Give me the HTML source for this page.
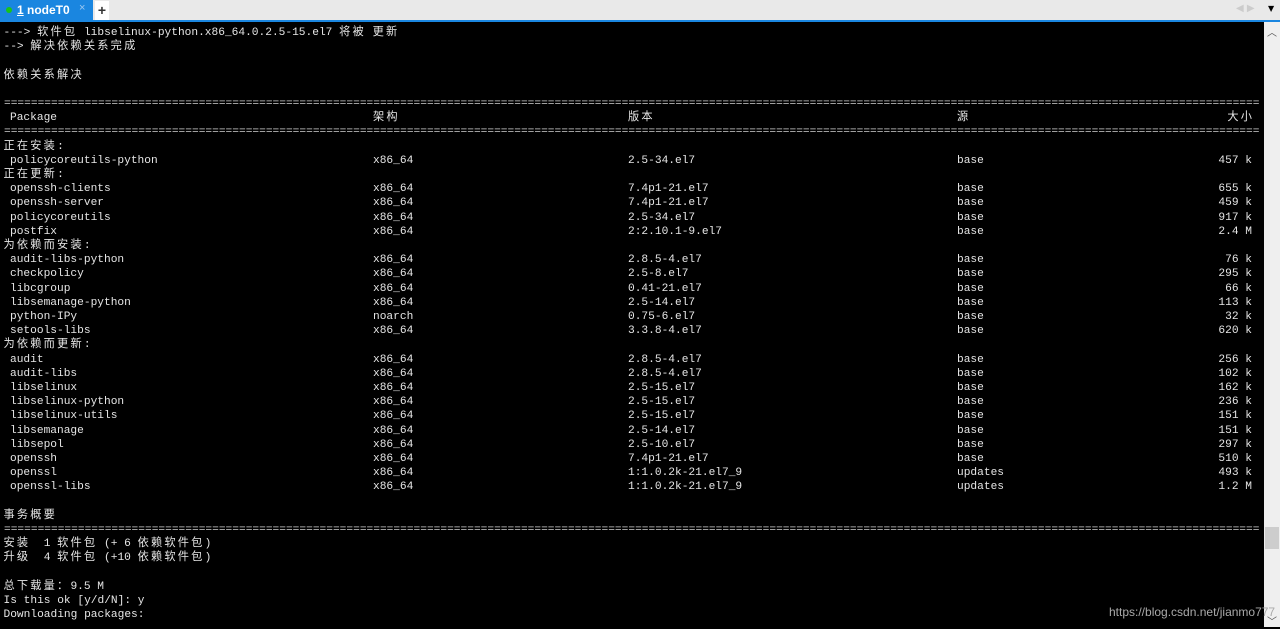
<!DOCTYPE html>
<html><head><meta charset="utf-8"><style>
*{margin:0;padding:0;box-sizing:border-box}
body{width:1280px;height:627px;overflow:hidden;background:#000;position:relative;font-family:"Liberation Mono","Noto Sans CJK SC",monospace;}
#bar{position:absolute;left:0;top:0;width:1280px;height:20px;background:#e9e9e9}
#tab{position:absolute;left:0;top:0;width:93px;height:21px;background:#1a86e0;color:#fff;font:bold 12px "Liberation Sans",sans-serif;}
#tab .dot{position:absolute;left:6px;top:7px;width:6px;height:6px;border-radius:50%;background:#19c419}
#tab .t{position:absolute;left:17px;top:3px}
#tab .x{position:absolute;left:79px;top:2px;font-weight:normal;color:#9cc8f0;font-size:11px}
#plus{position:absolute;left:95px;top:1px;width:14px;height:19px;background:#fff;font:bold 14px "Liberation Sans",sans-serif;text-align:center;line-height:18px;color:#333}
#line{position:absolute;left:0;top:20px;width:1280px;height:2px;background:#1a86e0}
#arrows{position:absolute;left:1236px;top:3px;font-size:10px;color:#ccc;font-family:"DejaVu Sans",sans-serif}
#dd{position:absolute;left:1268px;top:4px;font-size:8px;color:#000;font-family:"DejaVu Sans",sans-serif}
#sb{position:absolute;left:1264px;top:22px;width:16px;height:605px;background:#efefef}
#thumb{position:absolute;left:1265px;top:527px;width:14px;height:22px;background:#cdcdcd}
.r{position:absolute;left:0;height:14.2px;line-height:14.2px;font-size:11.2px;color:#e6e6e6;white-space:pre;width:1262px}
.r span{position:absolute;top:0}
i{font-style:normal;letter-spacing:2.2px}
.c0{left:3.5px}.c1{left:10px}.c2{left:373px}.c3{left:628px}.c4{left:957px}.c5{right:10px;text-align:right}
.eq{position:absolute;left:4px;width:1255px;overflow:hidden;color:#cfcfcf}
#wm{position:absolute;left:1109px;top:605px;font:12px "Liberation Sans",sans-serif;color:#aaa}
</style></head><body>
<div id="bar"></div>
<div id="tab"><div class="dot"></div><div class="t"><u>1</u> nodeT0</div><div class="x">×</div></div>
<div id="plus">+</div>
<div id="arrows">◀ ▶</div><div id="dd">▼</div>
<div id="line"></div>
<div id="sb"></div><div id="thumb"></div>
<div style="position:absolute;left:1267px;top:24px;font-size:10px;color:#555">︿</div>
<div style="position:absolute;left:1267px;top:613px;font-size:10px;color:#555">﹀</div>
<div style="position:absolute;left:0;top:2px;width:1280px;height:627px">
<div class="r" style="top:24px"><span class="c0">---&gt; <i>软件包</i> libselinux-python.x86_64.0.2.5-15.el7 <i>将被</i> <i>更新</i></span></div>
<div class="r" style="top:38.2px"><span class="c0">--&gt; <i>解决依赖关系完成</i></span></div>
<div class="r" style="top:66.6px"><span class="c0"><i>依赖关系解决</i></span></div>
<div class="r eq" style="top:95px">======================================================================================================================================================================================================</div>
<div class="r" style="top:109.2px"><span class="c1">Package</span><span class="c2"><i>架构</i></span><span class="c3"><i>版本</i></span><span class="c4"><i>源</i></span><span class="c5"><i>大</i>小</span></div>
<div class="r eq" style="top:123.4px">======================================================================================================================================================================================================</div>
<div class="r" style="top:137.6px"><span class="c0"><i>正在安装</i>:</span></div>
<div class="r" style="top:151.8px"><span class="c1">policycoreutils-python</span><span class="c2">x86_64</span><span class="c3">2.5-34.el7</span><span class="c4">base</span><span class="c5">457 k</span></div>
<div class="r" style="top:166px"><span class="c0"><i>正在更新</i>:</span></div>
<div class="r" style="top:180.2px"><span class="c1">openssh-clients</span><span class="c2">x86_64</span><span class="c3">7.4p1-21.el7</span><span class="c4">base</span><span class="c5">655 k</span></div>
<div class="r" style="top:194.4px"><span class="c1">openssh-server</span><span class="c2">x86_64</span><span class="c3">7.4p1-21.el7</span><span class="c4">base</span><span class="c5">459 k</span></div>
<div class="r" style="top:208.6px"><span class="c1">policycoreutils</span><span class="c2">x86_64</span><span class="c3">2.5-34.el7</span><span class="c4">base</span><span class="c5">917 k</span></div>
<div class="r" style="top:222.8px"><span class="c1">postfix</span><span class="c2">x86_64</span><span class="c3">2:2.10.1-9.el7</span><span class="c4">base</span><span class="c5">2.4 M</span></div>
<div class="r" style="top:237px"><span class="c0"><i>为依赖而安装</i>:</span></div>
<div class="r" style="top:251.2px"><span class="c1">audit-libs-python</span><span class="c2">x86_64</span><span class="c3">2.8.5-4.el7</span><span class="c4">base</span><span class="c5">76 k</span></div>
<div class="r" style="top:265.4px"><span class="c1">checkpolicy</span><span class="c2">x86_64</span><span class="c3">2.5-8.el7</span><span class="c4">base</span><span class="c5">295 k</span></div>
<div class="r" style="top:279.6px"><span class="c1">libcgroup</span><span class="c2">x86_64</span><span class="c3">0.41-21.el7</span><span class="c4">base</span><span class="c5">66 k</span></div>
<div class="r" style="top:293.8px"><span class="c1">libsemanage-python</span><span class="c2">x86_64</span><span class="c3">2.5-14.el7</span><span class="c4">base</span><span class="c5">113 k</span></div>
<div class="r" style="top:308px"><span class="c1">python-IPy</span><span class="c2">noarch</span><span class="c3">0.75-6.el7</span><span class="c4">base</span><span class="c5">32 k</span></div>
<div class="r" style="top:322.2px"><span class="c1">setools-libs</span><span class="c2">x86_64</span><span class="c3">3.3.8-4.el7</span><span class="c4">base</span><span class="c5">620 k</span></div>
<div class="r" style="top:336.4px"><span class="c0"><i>为依赖而更新</i>:</span></div>
<div class="r" style="top:350.6px"><span class="c1">audit</span><span class="c2">x86_64</span><span class="c3">2.8.5-4.el7</span><span class="c4">base</span><span class="c5">256 k</span></div>
<div class="r" style="top:364.8px"><span class="c1">audit-libs</span><span class="c2">x86_64</span><span class="c3">2.8.5-4.el7</span><span class="c4">base</span><span class="c5">102 k</span></div>
<div class="r" style="top:379px"><span class="c1">libselinux</span><span class="c2">x86_64</span><span class="c3">2.5-15.el7</span><span class="c4">base</span><span class="c5">162 k</span></div>
<div class="r" style="top:393.2px"><span class="c1">libselinux-python</span><span class="c2">x86_64</span><span class="c3">2.5-15.el7</span><span class="c4">base</span><span class="c5">236 k</span></div>
<div class="r" style="top:407.4px"><span class="c1">libselinux-utils</span><span class="c2">x86_64</span><span class="c3">2.5-15.el7</span><span class="c4">base</span><span class="c5">151 k</span></div>
<div class="r" style="top:421.6px"><span class="c1">libsemanage</span><span class="c2">x86_64</span><span class="c3">2.5-14.el7</span><span class="c4">base</span><span class="c5">151 k</span></div>
<div class="r" style="top:435.8px"><span class="c1">libsepol</span><span class="c2">x86_64</span><span class="c3">2.5-10.el7</span><span class="c4">base</span><span class="c5">297 k</span></div>
<div class="r" style="top:450px"><span class="c1">openssh</span><span class="c2">x86_64</span><span class="c3">7.4p1-21.el7</span><span class="c4">base</span><span class="c5">510 k</span></div>
<div class="r" style="top:464.2px"><span class="c1">openssl</span><span class="c2">x86_64</span><span class="c3">1:1.0.2k-21.el7_9</span><span class="c4">updates</span><span class="c5">493 k</span></div>
<div class="r" style="top:478.4px"><span class="c1">openssl-libs</span><span class="c2">x86_64</span><span class="c3">1:1.0.2k-21.el7_9</span><span class="c4">updates</span><span class="c5">1.2 M</span></div>
<div class="r" style="top:506.8px"><span class="c0"><i>事务概要</i></span></div>
<div class="r eq" style="top:521px">======================================================================================================================================================================================================</div>
<div class="r" style="top:535.2px"><span class="c0"><i>安装</i>  1 <i>软件包</i> (+ 6 <i>依赖软件包</i>)</span></div>
<div class="r" style="top:549.4px"><span class="c0"><i>升级</i>  4 <i>软件包</i> (+10 <i>依赖软件包</i>)</span></div>
<div class="r" style="top:577.8px"><span class="c0"><i>总下载量：</i>9.5 M</span></div>
<div class="r" style="top:592px"><span class="c0">Is this ok [y/d/N]: y</span></div>
<div class="r" style="top:606.2px"><span class="c0">Downloading packages:</span></div>
</div>
<div id="wm">https://blog.csdn.net/jianmo777</div>
</body></html>
